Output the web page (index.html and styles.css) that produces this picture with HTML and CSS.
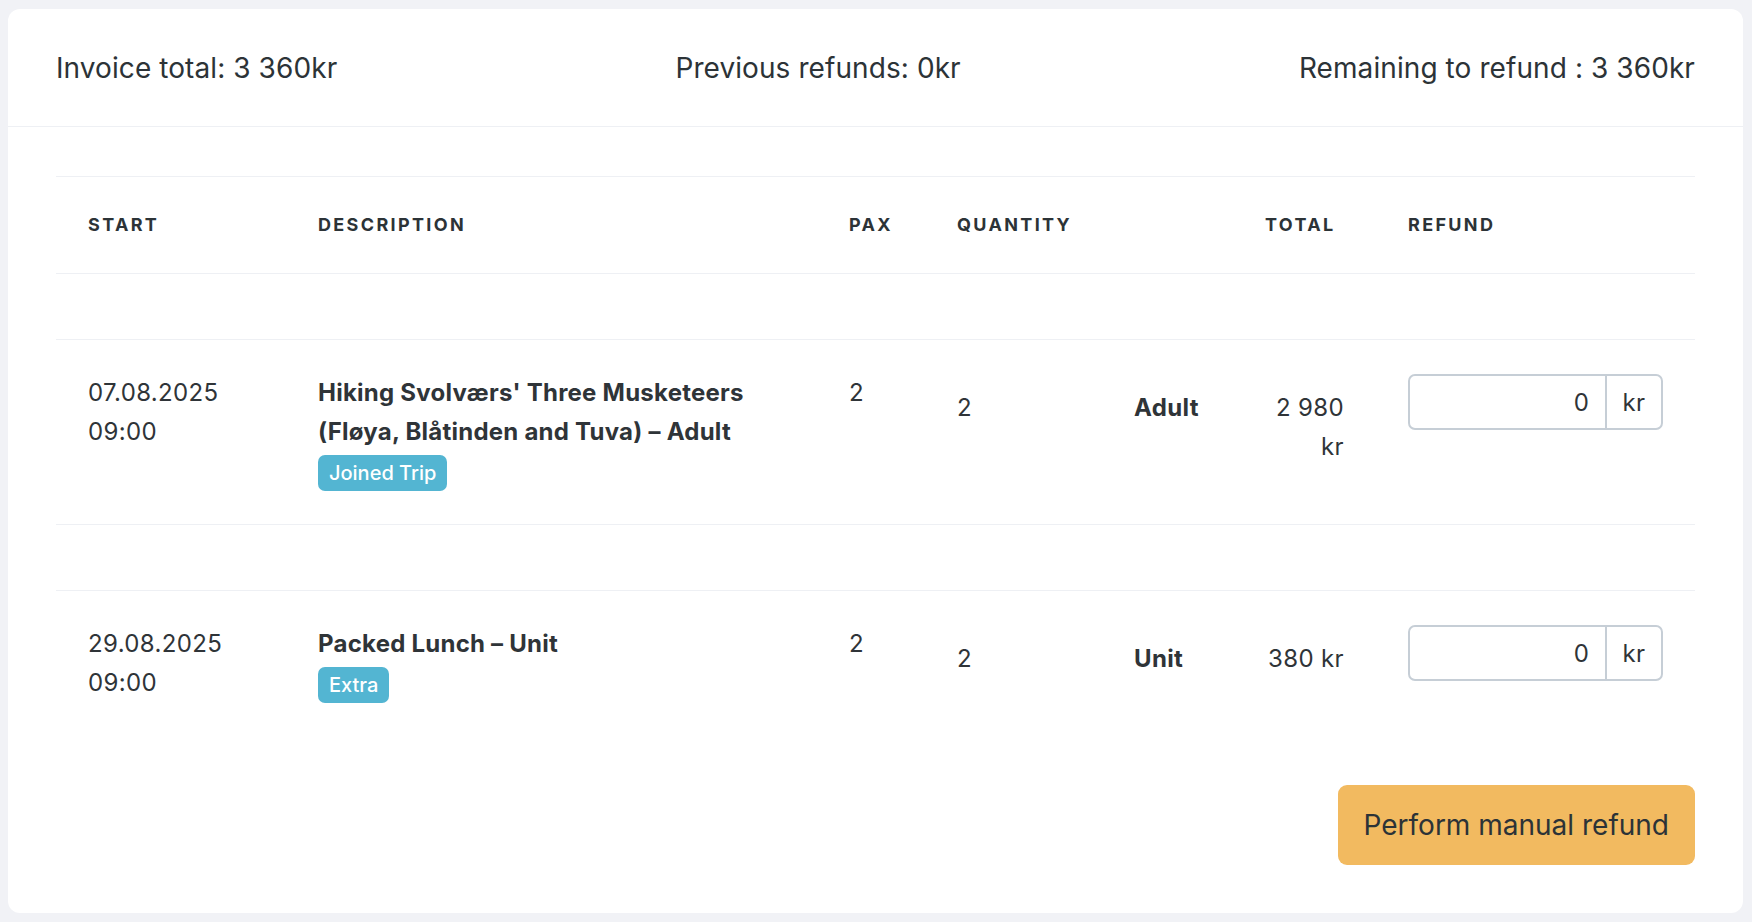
FILE: index.html
```html
<!DOCTYPE html>
<html lang="en">
<head>
<meta charset="utf-8">
<title>Manual refund</title>
<link rel="stylesheet" href="styles.css">
</head>
<body>
<div class="card">
  <div class="card-header">
    <div class="stat">Invoice total: 3 360kr</div>
    <div class="stat">Previous refunds: 0kr</div>
    <div class="stat">Remaining to refund : 3 360kr</div>
  </div>
  <div class="card-body">
    <table class="items">
      <colgroup>
        <col class="c-start">
        <col class="c-desc">
        <col class="c-pax">
        <col class="c-qty">
        <col class="c-total">
        <col class="c-refund">
      </colgroup>
      <thead>
        <tr>
          <th>Start</th>
          <th>Description</th>
          <th>Pax</th>
          <th>Quantity</th>
          <th>Total</th>
          <th>Refund</th>
        </tr>
      </thead>
      <tbody>
        <tr class="spacer"><td colspan="6"></td></tr>
        <tr class="item">
          <td>07.08.2025<br>09:00</td>
          <td>
            <div class="desc">Hiking Svolværs' Three Musketeers (Fløya, Blåtinden and Tuva) – Adult</div>
            <span class="badge">Joined Trip</span>
          </td>
          <td>2</td>
          <td class="qty-cell"><div class="qty"><span class="qty-num">2</span><span class="qty-unit">Adult</span></div></td>
          <td class="total">2&nbsp;980 kr</td>
          <td>
            <div class="input-group">
              <input class="amount" type="text" value="0">
              <span class="addon">kr</span>
            </div>
          </td>
        </tr>
        <tr class="spacer"><td colspan="6"></td></tr>
        <tr class="item last">
          <td>29.08.2025<br>09:00</td>
          <td>
            <div class="desc">Packed Lunch – Unit</div>
            <span class="badge">Extra</span>
          </td>
          <td>2</td>
          <td class="qty-cell"><div class="qty"><span class="qty-num">2</span><span class="qty-unit">Unit</span></div></td>
          <td class="total">380&nbsp;kr</td>
          <td>
            <div class="input-group">
              <input class="amount" type="text" value="0">
              <span class="addon">kr</span>
            </div>
          </td>
        </tr>
      </tbody>
    </table>
    <div class="actions">
      <button class="btn-refund" type="button">Perform manual refund</button>
    </div>
  </div>
</div>
</body>
</html>
```

FILE: styles.css
```css
* {
  box-sizing: border-box;
}

html, body {
  margin: 0;
  padding: 0;
}

body {
  background: #f1f2f6;
  padding: 9px 9px 9px 8px;
  font-family: "Inter", "Liberation Sans", sans-serif;
  color: #2c3337;
}

.card {
  background: #ffffff;
  border-radius: 12px;
  min-height: 904px;
}

.card-header {
  display: flex;
  justify-content: space-between;
  align-items: center;
  padding: 39px 48px 38px;
  border-bottom: 1px solid #eef0f4;
}

.stat {
  font-size: 28px;
  line-height: 40px;
  color: #2c3337;
  letter-spacing: 0.003em;
}

.card-body {
  padding: 49px 48px 48px;
}

.items {
  width: 100%;
  border-collapse: collapse;
  table-layout: fixed;
}

.c-start { width: 230px; }
.c-desc { width: 531px; }
.c-pax { width: 108px; }
.c-qty { width: 308px; }
.c-total { width: 143px; }
.c-refund { width: 319px; }

.items tr {
  border-top: 1px solid #eef0f4;
}

.items th {
  text-align: left;
  font-size: 18px;
  font-weight: 700;
  letter-spacing: 0.13em;
  text-transform: uppercase;
  line-height: 39px;
  padding: 28px 32px 29px;
  color: #2c3337;
}

.items td {
  vertical-align: top;
  font-size: 24px;
  line-height: 39px;
  padding: 33px 32px 33px;
  color: #2f3438;
  letter-spacing: 0.015em;
}

.items .spacer td {
  padding: 0;
  height: 66px;
}

.desc {
  font-weight: 700;
  letter-spacing: 0.01em;
}

.badge {
  display: inline-block;
  margin-top: 4px;
  background: #53b5d2;
  color: #ffffff;
  font-size: 20px;
  line-height: 36px;
  padding: 0 11px;
  border-radius: 7px;
  font-weight: 500;
  letter-spacing: 0;
}

.items td.qty-cell,
.items td.total {
  padding-top: 48px;
}

.qty {
  display: flex;
}

.qty-num {
  width: 177px;
}

.qty-unit {
  font-weight: 700;
}

.items td.total {
  text-align: right;
}

.input-group {
  display: flex;
  height: 56px;
  border: 2px solid #c6ced6;
  border-radius: 7px;
  margin-top: 1px;
}

.amount {
  flex: 1;
  min-width: 0;
  border: 0;
  outline: none;
  background: transparent;
  text-align: right;
  font-family: inherit;
  font-size: 24px;
  color: #2f3438;
  padding: 0 16px;
}

.addon {
  width: 56px;
  border-left: 2px solid #c6ced6;
  display: flex;
  align-items: center;
  justify-content: center;
  font-size: 24px;
  color: #2f3438;
}

.actions {
  display: flex;
  justify-content: flex-end;
  margin-top: 49px;
}

.btn-refund {
  background: #f2ba60;
  border: 0;
  border-radius: 9px;
  height: 80px;
  padding: 0 26px;
  font-family: inherit;
  font-size: 28px;
  color: #2c3337;
  cursor: pointer;
}
```
